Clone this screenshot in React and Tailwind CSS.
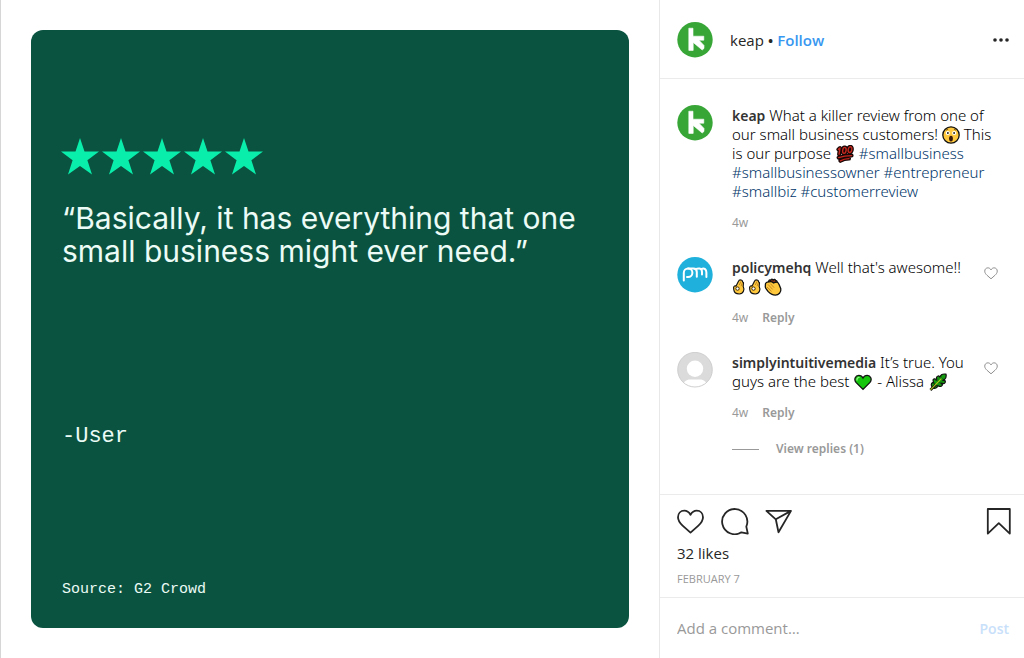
import React from "react";

function KeapAvatar() {
  return (
    <svg viewBox="0 0 36 36" className="size-9 shrink-0" role="img" aria-label="keap">
      <circle cx="18" cy="17.7" r="17.7" fill="#37a637" />
      <path d="M11.8 6.2H16V14.2H26.8V18.2H22L27 23.4V26.4L25.2 28L16.2 20.4V28.4H11.8Z" fill="#fff" stroke="#fff" strokeWidth=".6" strokeLinejoin="round" />
    </svg>
  );
}

function PolicyAvatar() {
  return (
    <svg viewBox="0 0 36 36" className="size-9 shrink-0" role="img" aria-label="policymehq">
      <circle cx="18" cy="17.7" r="17.7" fill="#1fb1db" />
      <g fill="none" stroke="#fff" strokeWidth="2" strokeLinecap="round">
        <path d="M6.8 23.4V15.8A4.3 4.3 0 1 1 11.1 20.1H10" />
        <path d="M11.1 11.5H16.4C18.8 11.5 19.8 13 19.8 15V19.8M18.6 12.4C20 11.4 21.4 11.4 22.6 11.5C24.8 11.8 25 13.4 25 15V17.6M24 12.2C27.6 10.4 29.4 12.6 29.4 15.6V20" />
      </g>
    </svg>
  );
}

function BlankAvatar() {
  return (
    <svg viewBox="0 0 36 36" className="size-9 shrink-0" role="img" aria-label="simplyintuitivemedia">
      <clipPath id="blank-clip">
        <circle cx="18" cy="17.7" r="17.3" />
      </clipPath>
      <circle cx="18" cy="17.7" r="17.3" fill="#dbdbdb" />
      <g clipPath="url(#blank-clip)" fill="#fff">
        <circle cx="18" cy="16.8" r="8.2" />
        <path d="M5 36C6 30 9 27.4 13 27.4H23C27 27.4 30 30 31 36Z" />
      </g>
      <circle cx="18" cy="17.7" r="17.3" fill="none" stroke="#cbcbcb" strokeWidth=".9" />
    </svg>
  );
}

function Emoji({ label, className = "mx-px w-[18px]", children }) {
  return (
    <svg viewBox="0 0 18 18" className={"inline-block h-[18px] align-[-4px] " + className} role="img" aria-label={label}>
      {children}
    </svg>
  );
}

function Astonished() {
  return (
    <Emoji label="astonished face" className="w-[18px]">
      <circle cx="9" cy="9" r="8.2" fill="#ffc83d" stroke="#111" strokeWidth="1.3" />
      <circle cx="5.8" cy="7" r="2.1" fill="#fff" />
      <circle cx="12.2" cy="7" r="2.1" fill="#fff" />
      <circle cx="5.9" cy="7" r=".9" fill="#111" />
      <circle cx="12.1" cy="7" r=".9" fill="#111" />
      <path d="M4 4.2L6.2 3M14 4.2L11.8 3" stroke="#6b4a10" strokeWidth=".9" />
      <ellipse cx="9" cy="12.6" rx="1.9" ry="2.9" fill="#3a1a0a" />
    </Emoji>
  );
}

function HundredStrokes() {
  return (
    <>
      <path d="M2.4 4.4L4 3L3.1 9.2" />
      <ellipse cx="8.4" cy="5.4" rx="1.7" ry="3" transform="rotate(10 8.4 5.4)" />
      <ellipse cx="14" cy="4.6" rx="1.8" ry="2.9" transform="rotate(10 14 4.6)" />
      <path d="M2.6 12.6C7 11.1 11 10.6 15.6 10.6M4.4 15.8C7.5 14 10 13.7 13 13.6" />
    </>
  );
}

function Hundred() {
  return (
    <Emoji label="hundred points">
      <g fill="none" strokeLinecap="round" strokeLinejoin="round">
        <g stroke="#180606" strokeWidth="4">
          <HundredStrokes />
        </g>
        <g stroke="#c2281e" strokeWidth="1.4">
          <HundredStrokes />
        </g>
      </g>
    </Emoji>
  );
}

function OkHand() {
  return (
    <Emoji label="OK hand" className="w-4">
      <path
        d="M4.6 8L7 3C7.8 1.4 9 .8 10 1.2C11.2 1 12 2 11.8 3.4C12.8 3.4 13.2 4.4 12.8 5.6L12.6 8.4C14.4 11.6 13 16.9 8.2 16.9C4.6 16.9 2.4 15.2 2 12L1.8 9.4C2.2 8 3.4 7.4 4.6 8Z"
        fill="#ffc83d"
        stroke="#111"
        strokeWidth="1.3"
        strokeLinejoin="round"
      />
      <circle cx="6.2" cy="10.8" r="1.9" fill="#fff" stroke="#3a2806" strokeWidth="1.1" />
      <path d="M10 2.8L8.2 6.8M11.6 4.4L10.2 8" stroke="#a86c14" strokeWidth=".8" fill="none" />
    </Emoji>
  );
}

function Clap() {
  return (
    <Emoji label="clapping hands" className="w-[18px]">
      <g stroke="#111" strokeWidth="1.3" strokeLinejoin="round">
        <path d="M4.6 4.4C4.4 2.4 5.6 1.2 6.6 2.4C7.2 .8 8.6 .6 9.2 2.2C10 .8 11.6 1.2 11.6 2.8C12.6 2.4 13.6 3.4 13 5Z" fill="#8a3416" />
        <path d="M1.4 7C1 4.6 3.4 3.8 5 4C6.6 3.4 8.4 4 9.6 5L12 4.2C13.4 3.8 14.6 5.2 15.2 6.8L16.8 10.8C17.4 14.4 14.6 17.1 11.4 17.1C8.4 17.1 6.2 15.8 4 13.4L1.8 10.4C1.2 9.4 1.2 8 1.4 7Z" fill="#ffc83d" />
      </g>
      <path d="M4 6.4L8.6 11.4M3 9L7.6 13.4M6.4 5.6L10 9.6" stroke="#b9781a" strokeWidth=".8" fill="none" />
    </Emoji>
  );
}

function GreenHeart() {
  return (
    <Emoji label="green heart">
      <path d="M9 16.4L2 9.4C-.4 6.4 1.4 2.4 4.8 2.4C6.8 2.4 8.2 3.4 9 5C9.8 3.4 11.2 2.4 13.2 2.4C16.6 2.4 18.4 6.4 16 9.4Z" fill="#16c60c" stroke="#111" strokeWidth="1.3" />
      <path d="M3 7C2.8 5.4 3.8 4.4 5 4.4" stroke="#8df086" strokeWidth="1.3" fill="none" strokeLinecap="round" />
    </Emoji>
  );
}

function Herb() {
  return (
    <Emoji label="herb">
      <path d="M3.4 14.4C1.8 12.4 2 10.4 3.6 9.6L4.6 10L4 7C4.6 5.6 5.8 5.4 6.8 6.4L7.2 7.4L7.6 4.2C8.4 2.6 9.8 2.6 10.6 4L12.4 1.8C13.8 .9 15.6 .9 17 1.2C17.4 3 17 5 15.8 6.2L13.8 7.4L16 7.6C16.8 9 16 10.2 14.6 10.6L12 10.4L13.4 11.4C13.4 12.8 12 13.8 10.4 13.4L8.6 12.6C8.4 15 6 16 3.8 15Z" fill="#169c10" stroke="#111" strokeWidth="1.2" strokeLinejoin="round" />
      <path d="M6 12.6L5 8.8M8.8 9.8L8.8 5.2M11.4 7L12.4 3.4M6 12.6L10.6 12.2M8.8 9.8L13.8 9M11.4 7L14.6 5" stroke="#0a4a08" strokeWidth=".6" />
      <path d="M1.4 17L7 11.4" stroke="#111" strokeWidth="2.6" />
      <path d="M1.4 16.8L12.4 5.6" stroke="#b8c81e" strokeWidth="1.1" />
    </Emoji>
  );
}

const HEART =
  "M13.5 7.8C11.9 4.9 9.7 3.7 7.3 3.7C3.6 3.7 1 6.5 1 10.3C1 13.8 3 16.2 5.6 18.6C8.2 20.9 10.8 23.2 13.5 25.6C16.2 23.2 18.8 20.9 21.4 18.6C24 16.2 26 13.8 26 10.3C26 6.5 23.4 3.7 19.7 3.7C17.3 3.7 15.1 4.9 13.5 7.8Z";

function Icon({ d }) {
  return (
    <svg viewBox="0 0 28 28" className="size-7" fill="none" stroke="#262626" strokeWidth="1.8" strokeLinejoin="round" aria-hidden="true">
      <path d={d} />
    </svg>
  );
}

function Tag({ children }) {
  return <a href="#tag" className="text-[#003569]">{children}</a>;
}

function User({ children }) {
  return <a href="#user" className="text-[14px] font-semibold text-[#333]">{children}</a>;
}

function Comment({ avatar, likeable, extra, children }) {
  return (
    <li className="flex items-start gap-[19px]">
      {avatar}
      <div className="min-w-0 flex-1 pt-px">
        <p className="text-[15px] leading-[19px] font-light whitespace-nowrap text-black">{children}</p>
        <div className="mt-[14px] flex gap-[14px] text-[12px] leading-4 text-[#999]">
          <time>4w</time>
          {likeable && <button type="button" className="font-semibold">Reply</button>}
        </div>
        {extra}
      </div>
      {likeable && (
        <button type="button" aria-label="Like comment" className="mt-[9px] mr-[26px]">
          <svg viewBox="0 0 27 28" className="size-[14px]" fill="none" stroke="#8e8e8e" strokeWidth="2" aria-hidden="true">
            <path d={HEART} />
          </svg>
        </button>
      )}
    </li>
  );
}

const STARS = [0, 41, 82, 123, 164];

function ReviewCard() {
  return (
    <div className="flex flex-1 flex-col rounded-xl bg-[#0a5340] px-[31px] pb-[29px] text-[#ecfbf5]">
      <svg viewBox="0 0 202 37" className="mt-[108px] -ml-px h-[37px] w-[202px]" role="img" aria-label="5 stars">
        {STARS.map((x) => (
          <path
            key={x}
            d="M19 0L23.5 13.6H38L26.4 22.2L31 36.4L19 28L7 36.4L11.6 22.2L0 13.6H14.5Z"
            fill="#09eeab"
            transform={"translate(" + x + " 0)"}
          />
        ))}
      </svg>
      <blockquote className="mt-[27px] font-['Inter',sans-serif] text-[30px] leading-[33px] whitespace-nowrap">
        “Basically, it has everything that one
        <br />
        small business might ever need.”
      </blockquote>
      <p className="mt-[157px] font-['Liberation_Mono',monospace] text-[22px] leading-6">-User</p>
      <p className="mt-auto font-['Liberation_Mono',monospace] text-[15px] leading-[18px]">Source: G2 Crowd</p>
    </div>
  );
}

export default function App() {
  return (
    <main className="flex min-h-screen bg-white font-['Noto_Sans',sans-serif] text-[#262626]">
      <section className="flex min-w-0 flex-1 border-l border-[#d6d6d6] p-[30px]">
        <ReviewCard />
      </section>

      <aside className="flex w-[365px] shrink-0 flex-col border-l border-[#e8e8e8]">
        <header className="flex items-center gap-[17px] border-b border-[#ebebeb] px-[17px] pt-[22px] pb-5">
          <KeapAvatar />
          <p className="flex-1 font-['Open_Sans',sans-serif] text-[15px] leading-[18px] font-semibold">
            <a href="#keap" className="font-medium">keap</a> <span>•</span>{" "}
            <button type="button" className="text-[#3897f0]">Follow</button>
          </p>
          <button type="button" aria-label="More options" className="-mr-[3px]">
            <svg viewBox="0 0 18 18" className="size-[18px]" fill="#262626" aria-hidden="true">
              <circle cx="3" cy="9" r="1.8" />
              <circle cx="9" cy="9" r="1.8" />
              <circle cx="15" cy="9" r="1.8" />
            </svg>
          </button>
        </header>

        <ul className="flex flex-1 flex-col gap-[26px] pt-[26px] pb-9 pl-[17px]">
          <Comment avatar={<KeapAvatar />}>
            <User>keap</User> What a killer review from one of
            <br />
            our small business customers! <Astonished /> This
            <br />
            is our purpose <Hundred /> <Tag>#smallbusiness</Tag>
            <br />
            <Tag>#smallbusinessowner</Tag> <Tag>#entrepreneur</Tag>
            <br />
            <Tag>#smallbiz</Tag> <Tag>#customerreview</Tag>
          </Comment>
          <Comment avatar={<PolicyAvatar />} likeable>
            <User>policymehq</User> Well that's awesome!!
            <br />
            <OkHand /><OkHand /><Clap />
          </Comment>
          <Comment
            avatar={<BlankAvatar />}
            likeable
            extra={
              <button type="button" className="mt-5 flex items-center gap-[17px] text-[12px] leading-4 font-semibold text-[#999]">
                <span className="h-px w-[27px] bg-[#999]" />
                View replies (1)
              </button>
            }
          >
            <User>simplyintuitivemedia</User> It’s true. You
            <br />
            guys are the best <GreenHeart /> - Alissa <Herb />
          </Comment>
        </ul>

        <section className="border-t border-[#ebebeb] px-[17px] pt-3 pb-2.5 font-['Open_Sans',sans-serif]">
          <div className="-mr-[5px] flex gap-4">
            <button type="button" aria-label="Like"><Icon d={HEART} /></button>
            <button type="button" aria-label="Comment">
              <Icon d="M25.3 19.6A12.6 12.6 0 1 0 20.4 25.3L26.8 26.6Z" />
            </button>
            <button type="button" aria-label="Share">
              <Icon d="M1.4 3.9H26L13.5 25.2L10.8 12.3ZM10.8 12.3L26 3.9" />
            </button>
            <button type="button" aria-label="Save" className="ml-auto">
              <Icon d="M3.8 2H25.8V26.6L14.8 16.2L3.8 26.6Z" />
            </button>
          </div>
          <p className="mt-[9px] text-[15px] leading-[18px] font-medium">32 likes</p>
          <p className="mt-[9px] text-[11px] leading-4 text-[#999]">FEBRUARY 7</p>
        </section>

        <form className="flex items-center border-t border-[#ebebeb] pr-[15px] pl-[17px] font-['Open_Sans',sans-serif]">
          <input
            aria-label="Add a comment"
            placeholder="Add a comment…"
            className="h-[60px] min-w-0 flex-1 text-[15px] outline-none placeholder:text-[#999]"
          />
          <button type="button" className="text-[14px] font-semibold text-[#c8e0fa]">Post</button>
        </form>
      </aside>
    </main>
  );
}
